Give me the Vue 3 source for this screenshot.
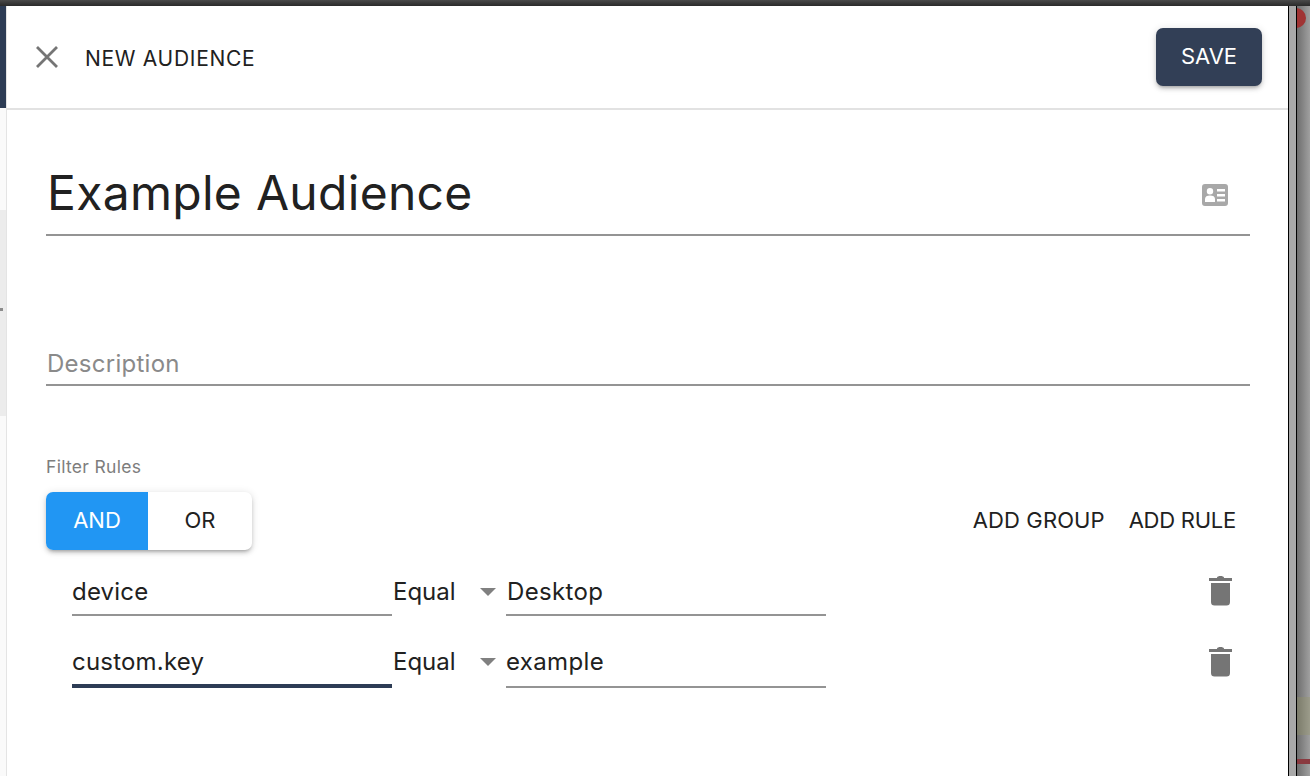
<template>
  <div class="screen">
    <div class="topbar"></div>
    <div class="stage">
      <div class="left-strip">
        <div class="navy"></div>
        <div class="pale"></div>
        <div class="grey"><i class="peek"></i></div>
        <div class="pale fill"></div>
      </div>
      <main class="dialog">
        <header class="head">
          <svg class="close" viewBox="0 0 24 24"><path d="M2 2 22 22M22 2 2 22" /></svg>
          <span class="head-title">NEW AUDIENCE</span>
          <button class="save">SAVE</button>
        </header>
        <section class="body">
          <div class="name-field">
            <span class="name">Example Audience</span>
            <svg class="card-icon" viewBox="0 0 26 22">
              <path fill-rule="evenodd" d="M3 0H23A3 3 0 0 1 26 3V19A3 3 0 0 1 23 22H3A3 3 0 0 1 0 19V3A3 3 0 0 1 3 0ZM8 4A3.2 3.2 0 1 0 8 10.400A3.200 3.200 0 1 0 8 4ZM3 18H13V15C13 12.500 11 11.500 8 11.500S3 12.500 3 15ZM15 5V7.500H23V5ZM15 10V12.500H23V10ZM15 15V17.500H23V15Z" />
            </svg>
          </div>
          <div class="desc-field">Description</div>
          <div class="rules-label">Filter Rules</div>
          <div class="toolbar">
            <div class="toggle">
              <span class="opt on">AND</span>
              <span class="opt">OR</span>
            </div>
            <div class="actions">
              <span class="add-group">ADD GROUP</span>
              <span class="add-rule">ADD RULE</span>
            </div>
          </div>
          <div v-for="r in rules" :key="r.key" class="rule">
            <div class="cell key" :class="{ focused: r.focused }">{{ r.key }}</div>
            <div class="op">
              <span>Equal</span>
              <i class="arrow"></i>
            </div>
            <div class="cell val">{{ r.value }}</div>
            <svg class="trash" viewBox="0 0 23 30">
              <path d="M8 1.500C8.500 .5 9.500 0 11.500 0S14.500 .5 15 1.500L15 2H23V5H0V2H8ZM2 7H21V26A3.500 3.500 0 0 1 17.500 29.500H5.500A3.500 3.500 0 0 1 2 26Z" />
            </svg>
          </div>
        </section>
      </main>
      <div class="right-strip">
        <div class="line"></div>
        <div class="bar"></div>
        <div class="line"></div>
        <div class="back">
          <i class="dot"></i>
          <i class="olive"></i>
          <i class="red"></i>
        </div>
      </div>
    </div>
  </div>
</template>

<script setup>
const rules = [
  { key: 'device', value: 'Desktop', focused: false },
  { key: 'custom.key', value: 'example', focused: true }
]
</script>

<style>
html, body { margin: 0; background: #fff; }
</style>

<style scoped>
.screen {
  width: 1310px;
  height: 776px;
  overflow: hidden;
  display: flex;
  flex-direction: column;
  font-family: Inter, "Noto Sans", sans-serif;
  color: #212121;
}
.topbar { height: 6px; background: linear-gradient(#4a4a4a, #2a2a2a); flex: none; }
.stage { flex: 1; display: flex; min-height: 0; }
.left-strip { width: 6px; flex: none; display: flex; flex-direction: column; }
.navy { height: 102px; background: #2d3c55; }
.pale { height: 102px; background: #fafafa; }
.grey { height: 206px; background: #ececec; position: relative; overflow: hidden; }
.peek { position: absolute; left: 0; top: 98px; width: 3px; height: 3px; background: #8c8c8c; }
.fill { flex: 1; height: auto; }
.dialog {
  width: 1282px;
  flex: none;
  background: #fff;
  border-left: 1px solid #e4e4e4;
  box-sizing: border-box;
  display: flex;
  flex-direction: column;
}
.head {
  height: 104px;
  flex: none;
  box-sizing: border-box;
  border-bottom: 2px solid #e2e2e2;
  display: flex;
  align-items: center;
  padding: 0 26px 0 28px;
}
.close { width: 24px; height: 24px; fill: none; stroke: #757575; stroke-width: 2.800; margin-top: -1px; }
.head-title { margin-left: 26px; font-size: 21px; letter-spacing: .7px; margin-top: 3px; }
.save {
  margin-left: auto;
  width: 106px;
  height: 58px;
  margin-top: 0;
  padding: 0 0 2px;
  border: 0;
  border-radius: 7px;
  background: #323f56;
  color: #fff;
  font: 22px Inter, sans-serif;
  box-shadow: 0 3px 3px -2px rgba(0,0,0,.2), 0 3px 4px rgba(0,0,0,.14), 0 1px 8px rgba(0,0,0,.12);
}
.body { padding: 0 38px 0 39px; display: flex; flex-direction: column; }
.name-field {
  margin-top: 50px;
  height: 76px;
  box-sizing: border-box;
  border-bottom: 2px solid #949494;
  display: flex;
  align-items: center;
  justify-content: space-between;
  padding: 0 22px 8px 1px;
}
.name { font-size: 48px; letter-spacing: .3px; margin-bottom: 2px; }
.card-icon { width: 26px; height: 22px; fill: #a8a8a8; margin-top: 4px; }
.desc-field {
  margin-top: 112px;
  height: 38px;
  box-sizing: border-box;
  border-bottom: 2px solid #949494;
  padding-left: 1px;
  font-size: 24px;
  line-height: 32px;
  letter-spacing: .27px;
  color: #8a8a8a;
}
.rules-label { margin-top: 70px; font-size: 17.500px; line-height: 22px; letter-spacing: .3px; color: #7d7d7d; }
.toolbar { margin-top: 14px; display: flex; align-items: center; justify-content: space-between; padding-right: 14px; }
.toggle {
  display: flex;
  width: 206px;
  height: 58px;
  border-radius: 7px;
  overflow: hidden;
  box-shadow: 0 3px 3px -2px rgba(0,0,0,.2), 0 3px 4px rgba(0,0,0,.14), 0 1px 8px rgba(0,0,0,.12);
  font-size: 22px;
}
.opt { flex: 1; display: flex; align-items: center; justify-content: center; padding-bottom: 2px; }
.on { flex: none; width: 102px; background: #2196f3; color: #fff; }
.actions { display: flex; gap: 24px; font-size: 22px; padding-bottom: 2px; }
.add-group { letter-spacing: .1px; }
.add-rule { letter-spacing: -.25px; }
.rule { display: flex; align-items: flex-start; padding-left: 26px; height: 71px; }
.cell {
  height: 66px;
  box-sizing: border-box;
  border-bottom: 2px solid #949494;
  font-size: 24px;
  line-height: 84px;
  letter-spacing: .2px;
}
.key { width: 320px; }
.val { width: 320px; padding-left: 1px; letter-spacing: .35px; }
.focused { height: 67px; border-bottom: 4px solid #2d3c55; }
.rule + .rule .cell { line-height: 82px; }
.rule + .rule .val { height: 67px; padding-left: 0; }
.op { width: 114px; height: 66px; display: flex; align-items: center; font-size: 24px; line-height: 40px; padding: 17px 0 0 1px; box-sizing: border-box; }
.rule + .rule .op { padding-top: 15px; }
.arrow {
  width: 0;
  height: 0;
  border: 8px solid transparent;
  border-top: 8px solid #808080;
  border-bottom: 0;
  margin: 0 0 0 24px;
}
.trash { width: 23px; height: 30px; fill: #757575; margin: 26px 0 0 383px; }
.right-strip { flex: 1; display: flex; min-width: 0; }
.line { width: 1px; background: #000; flex: none; }
.bar { width: 7px; background: #a8a8a8; flex: none; }
.back { flex: 1; background: linear-gradient(90deg, #6e6e6e, #a0a0a0); position: relative; overflow: hidden; }
.dot { position: absolute; left: -11px; top: 2px; width: 20px; height: 20px; border-radius: 50%; background: #a03434; }
.olive { position: absolute; left: 0; right: 0; top: 691px; height: 38px; background: rgba(150, 150, 100, .35); }
.red { position: absolute; left: 0; right: 0; top: 753px; height: 5px; background: #8a3a40; }
</style>
